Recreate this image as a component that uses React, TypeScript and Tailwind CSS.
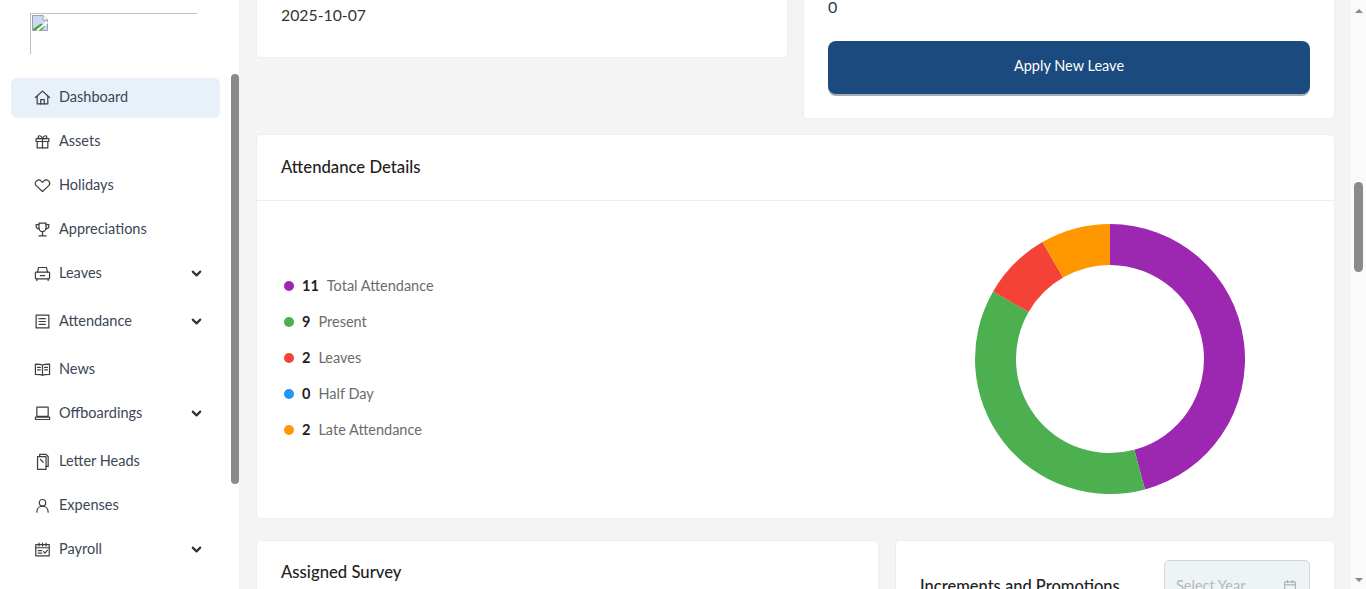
import React from "react";
import { ChevronDown } from "lucide-react";

const S = ({ children }: { children: React.ReactNode }) => (
  <svg viewBox="0 0 24 24" width="17" height="17" fill="none" stroke="#3d3d3d" strokeWidth="1.7" strokeLinecap="round" strokeLinejoin="round" className="shrink-0">
    {children}
  </svg>
);

const icons: Record<string, React.ReactNode> = {
  home: <S><path d="M2 12 12 3l10 9" /><path d="M4.500 10.500V21h15V10.500" /><path d="M9.500 21v-6h5v6" /></S>,
  gift: <S><rect x="3" y="8" width="18" height="4" /><path d="M4.500 12v9h15v-9" /><path d="M12 8v13" /><path d="M12 8c-2-5-6-5-6-2.500 0 1.500 1 2.500 3 2.500M12 8c2-5 6-5 6-2.500 0 1.500-1 2.500-3 2.500" /></S>,
  heart: <S><path d="M12 20.500 3.500 12.500C1.500 10.500 1.500 7.500 3.500 5.500c2-1.800 5-1.500 6.700.3L12 7.500l1.800-1.700c1.700-1.800 4.700-2.100 6.700-.3 2 2 2 5 0 7z" /></S>,
  trophy: <S><path d="M7 3h10v7a5 5 0 0 1-10 0z" /><path d="M7 5H3v2c0 2.500 2 4 4.500 4M17 5h4v2c0 2.500-2 4-4.500 4" /><path d="M12 15v5M7 21h10" /></S>,
  car: <S><path d="M5 10 6.500 3.500h11L19 10" /><rect x="2" y="10" width="20" height="9.500" rx="1" /><path d="M4 19.500V22M20 19.500V22M9 15h6" /></S>,
  list: <S><rect x="3" y="3" width="18" height="18" /><path d="M9 8h7M9 12h7M9 16h7M7 8h.5M7 12h.5M7 16h.5" /></S>,
  book: <S><path d="M12 6C10 4.500 6 4.500 2 4.500V19c4 0 8 0 10 1.500 2-1.500 6-1.500 10-1.500V4.500C18 4.500 14 4.500 12 6zM12 6v14.500" /><path d="M5 9h4M5 12.500h4M15 9h4M15 12.500h4" /></S>,
  laptop: <S><rect x="4" y="3" width="16" height="13" /><path d="M2 17h20v3.500H2z" /></S>,
  letter: <S><path d="M8 5V2h9l3 3v14h-3" /><rect x="5" y="5" width="12" height="18" /><path d="M9 9l4 4" /></S>,
  user: <S><circle cx="12" cy="8" r="4.500" /><path d="M4 21.500c0-5 3.500-8.500 8-8.500s8 3.500 8 8.500" /></S>,
  pay: <S><rect x="2.500" y="5" width="19" height="16" /><path d="M7 3v4M12 3v4M17 3v4M2.500 9.500h19M6 13.500h5M6 17h5M13.500 15l2 2 3.500-4" /></S>,
};

const nav: { label: string; icon: string; sub?: boolean; active?: boolean }[] = [
  { label: "Dashboard", icon: "home", active: true },
  { label: "Assets", icon: "gift" },
  { label: "Holidays", icon: "heart" },
  { label: "Appreciations", icon: "trophy" },
  { label: "Leaves", icon: "car", sub: true },
  { label: "Attendance", icon: "list", sub: true },
  { label: "News", icon: "book" },
  { label: "Offboardings", icon: "laptop", sub: true },
  { label: "Letter Heads", icon: "letter" },
  { label: "Expenses", icon: "user" },
  { label: "Payroll", icon: "pay", sub: true },
];

const legend = [
  { n: 11, label: "Total Attendance", dot: "bg-[#9c27b0]" },
  { n: 9, label: "Present", dot: "bg-[#4caf50]" },
  { n: 2, label: "Leaves", dot: "bg-[#f44336]" },
  { n: 0, label: "Half Day", dot: "bg-[#2196f3]" },
  { n: 2, label: "Late Attendance", dot: "bg-[#ff9800]" },
];

const slices = [
  { v: 11, c: "#9c27b0" },
  { v: 9, c: "#4caf50" },
  { v: 2, c: "#f44336" },
  { v: 2, c: "#ff9800" },
];

function Donut() {
  const total = 24;
  let a = 0;
  const R = 135;
  const r = 94;
  const pt = (rad: number, deg: number) => {
    const t = (deg * Math.PI) / 180;
    return `${(135 + rad * Math.sin(t)).toFixed(2)} ${(135 - rad * Math.cos(t)).toFixed(2)}`;
  };
  return (
    <svg width="270" height="270" viewBox="0 0 270 270" className="block">
      {slices.map((s) => {
        const b = a + (s.v / total) * 360;
        const large = b - a > 180 ? 1 : 0;
        const d = `M${pt(R, a)}A${R} ${R} 0 ${large} 1 ${pt(R, b)}L${pt(r, b)}A${r} ${r} 0 ${large} 0 ${pt(r, a)}Z`;
        a = b;
        return <path key={s.c} d={d} fill={s.c} />;
      })}
    </svg>
  );
}

const BrokenImage = () => (
  <svg width="16" height="16" viewBox="0 0 16 16" className="ml-[1px] mt-[1px]">
    <path d="M0.500 0.500H11L15.500 5V15.500H0.500z" fill="#c9d9f5" stroke="#a0a0a0" />
    <path d="M1 14 9 8.500 13 11 10 15H1z" fill="#4fa33a" />
    <path d="M5 15.500 15.500 7" stroke="#fff" strokeWidth="2" />
    <path d="M11 0.500V5H15.500" fill="#fff" stroke="#a0a0a0" />
  </svg>
);

export default function App() {
  return (
    <div className="flex h-[589px] w-[1366px] overflow-hidden bg-[#f4f4f4] font-['Lato','Noto_Sans',sans-serif] text-[14.5px] text-[#212529]">
      <aside className="flex h-full w-[239px] shrink-0 bg-white">
        <div className="w-[231px] shrink-0 overflow-hidden">
          <div className="ml-[30px] mt-[13px] h-[41px] w-[167px] border-l border-t border-[#c0c0c0]">
            <BrokenImage />
          </div>
          <nav className="mt-[24px] flex flex-col pl-[11px] pr-[11px]">
            {nav.map((item) => (
              <div
                key={item.label}
                className={`flex h-[40px] shrink-0 items-center gap-[8px] rounded-[6px] pl-[23px] pr-[16px] pb-[2px] text-[#3b4656] ${item.sub ? "mb-[8px]" : "mb-[4px]"} ${item.active ? "bg-[#e8f0fa]" : ""}`}
              >
                <span className="flex w-[17px] justify-center">{icons[item.icon]}</span>
                <span className="flex-1">{item.label}</span>
                {item.sub && <ChevronDown size={15} strokeWidth={3.4} className="text-[#333]" />}
              </div>
            ))}
          </nav>
        </div>
        <div className="w-[8px] shrink-0 pt-[74px]">
          <div className="h-[410px] w-full rounded-full bg-[#8a8a8a]" />
        </div>
      </aside>

      <main className="flex min-w-0 flex-1 flex-col overflow-hidden pl-[17px] pr-[16px]">
        <div className="flex h-[119px] shrink-0 items-start gap-[15px]">
          <div className="h-[58px] w-[532px] shrink-0 rounded-b-[5px] border border-t-0 border-[#eeeeee] bg-white pl-[24px] pt-[5px] text-[15.800px] leading-[20px] text-[#333]">
            2025-10-07
          </div>
          <div className="h-[119px] flex-1 rounded-b-[5px] border border-t-0 border-[#eeeeee] bg-white px-[24px]">
            <div className="h-[41px] text-[16px] leading-[14px] text-[#1f3a52]">0</div>
            <button className="flex h-[53px] w-full items-center justify-center rounded-[8px] bg-[#1b4a7e] pb-[3px] text-white shadow-[0_2px_0_#a6adb6]">
              Apply New Leave
            </button>
          </div>
        </div>

        <section className="mt-[15px] shrink-0 rounded-[5px] border border-[#eeeeee] bg-white">
          <div className="flex h-[66px] items-center border-b border-[#eeeeee] pl-[24px] text-[16.700px] font-medium text-[#222]">
            Attendance Details
          </div>
          <div className="flex h-[317px] items-center justify-between pl-[27px] pr-[89px]">
            <div className="mb-[3px] flex flex-col">
              {legend.map((l) => (
                <div key={l.label} className="flex h-[36px] items-center text-[14.500px]">
                  <span className={`h-[10px] w-[10px] rounded-full ${l.dot}`} />
                  <span className="ml-[8px] font-bold text-[#222]">{l.n}</span>
                  <span className="ml-[8px] text-[#6c6c6c]">{l.label}</span>
                </div>
              ))}
            </div>
            <div className="mb-[1px]">
              <Donut />
            </div>
          </div>
        </section>

        <div className="mt-[21px] flex shrink-0 gap-[16px]">
          <div className="h-[120px] w-[623px] shrink-0 rounded-[5px] border border-[#eeeeee] bg-white pl-[24px] pt-[20px] text-[16.700px] font-medium leading-[22px] text-[#222]">
            Assigned Survey
          </div>
          <div className="flex h-[120px] flex-1 items-start rounded-[5px] border border-[#eeeeee] bg-white pl-[24px] pr-[24px] pt-[19px]">
            <div className="flex-1 pt-[15px] text-[16.500px] font-medium leading-[22px] text-[#222]">Increments and Promotions</div>
            <div className="flex h-[50px] w-[146px] items-start justify-between rounded-[5px] border border-[#d6d6d6] bg-[#eef3f6] pl-[11px] pr-[12px] pt-[14px] text-[14.500px] text-[#b4b9bd]">
              <span className="whitespace-nowrap">Select Year...</span>
              <svg viewBox="0 0 24 24" width="14" height="14" fill="none" stroke="#9aa0a5" strokeWidth="1.6" className="mt-[4px] shrink-0">
                <rect x="3" y="5" width="18" height="17" />
                <path d="M3 10h18M8 2v5M16 2v5" />
              </svg>
            </div>
          </div>
        </div>
      </main>

      <div className="flex h-full w-[15px] shrink-0 flex-col bg-[#fafafa]">
        <div className="flex h-[13px] items-end justify-center">
          <span className="h-0 w-0 border-x-[4px] border-b-[4px] border-x-transparent border-b-[#8a8a8a]" />
        </div>
        <div className="ml-[3px] mt-[169px] h-[90px] w-[9px] rounded-full bg-[#8a8a8a]" />
        <div className="flex flex-1 items-end justify-center pb-[7px]">
          <span className="h-0 w-0 border-x-[4px] border-t-[4px] border-x-transparent border-t-[#8a8a8a]" />
        </div>
      </div>
    </div>
  );
}
